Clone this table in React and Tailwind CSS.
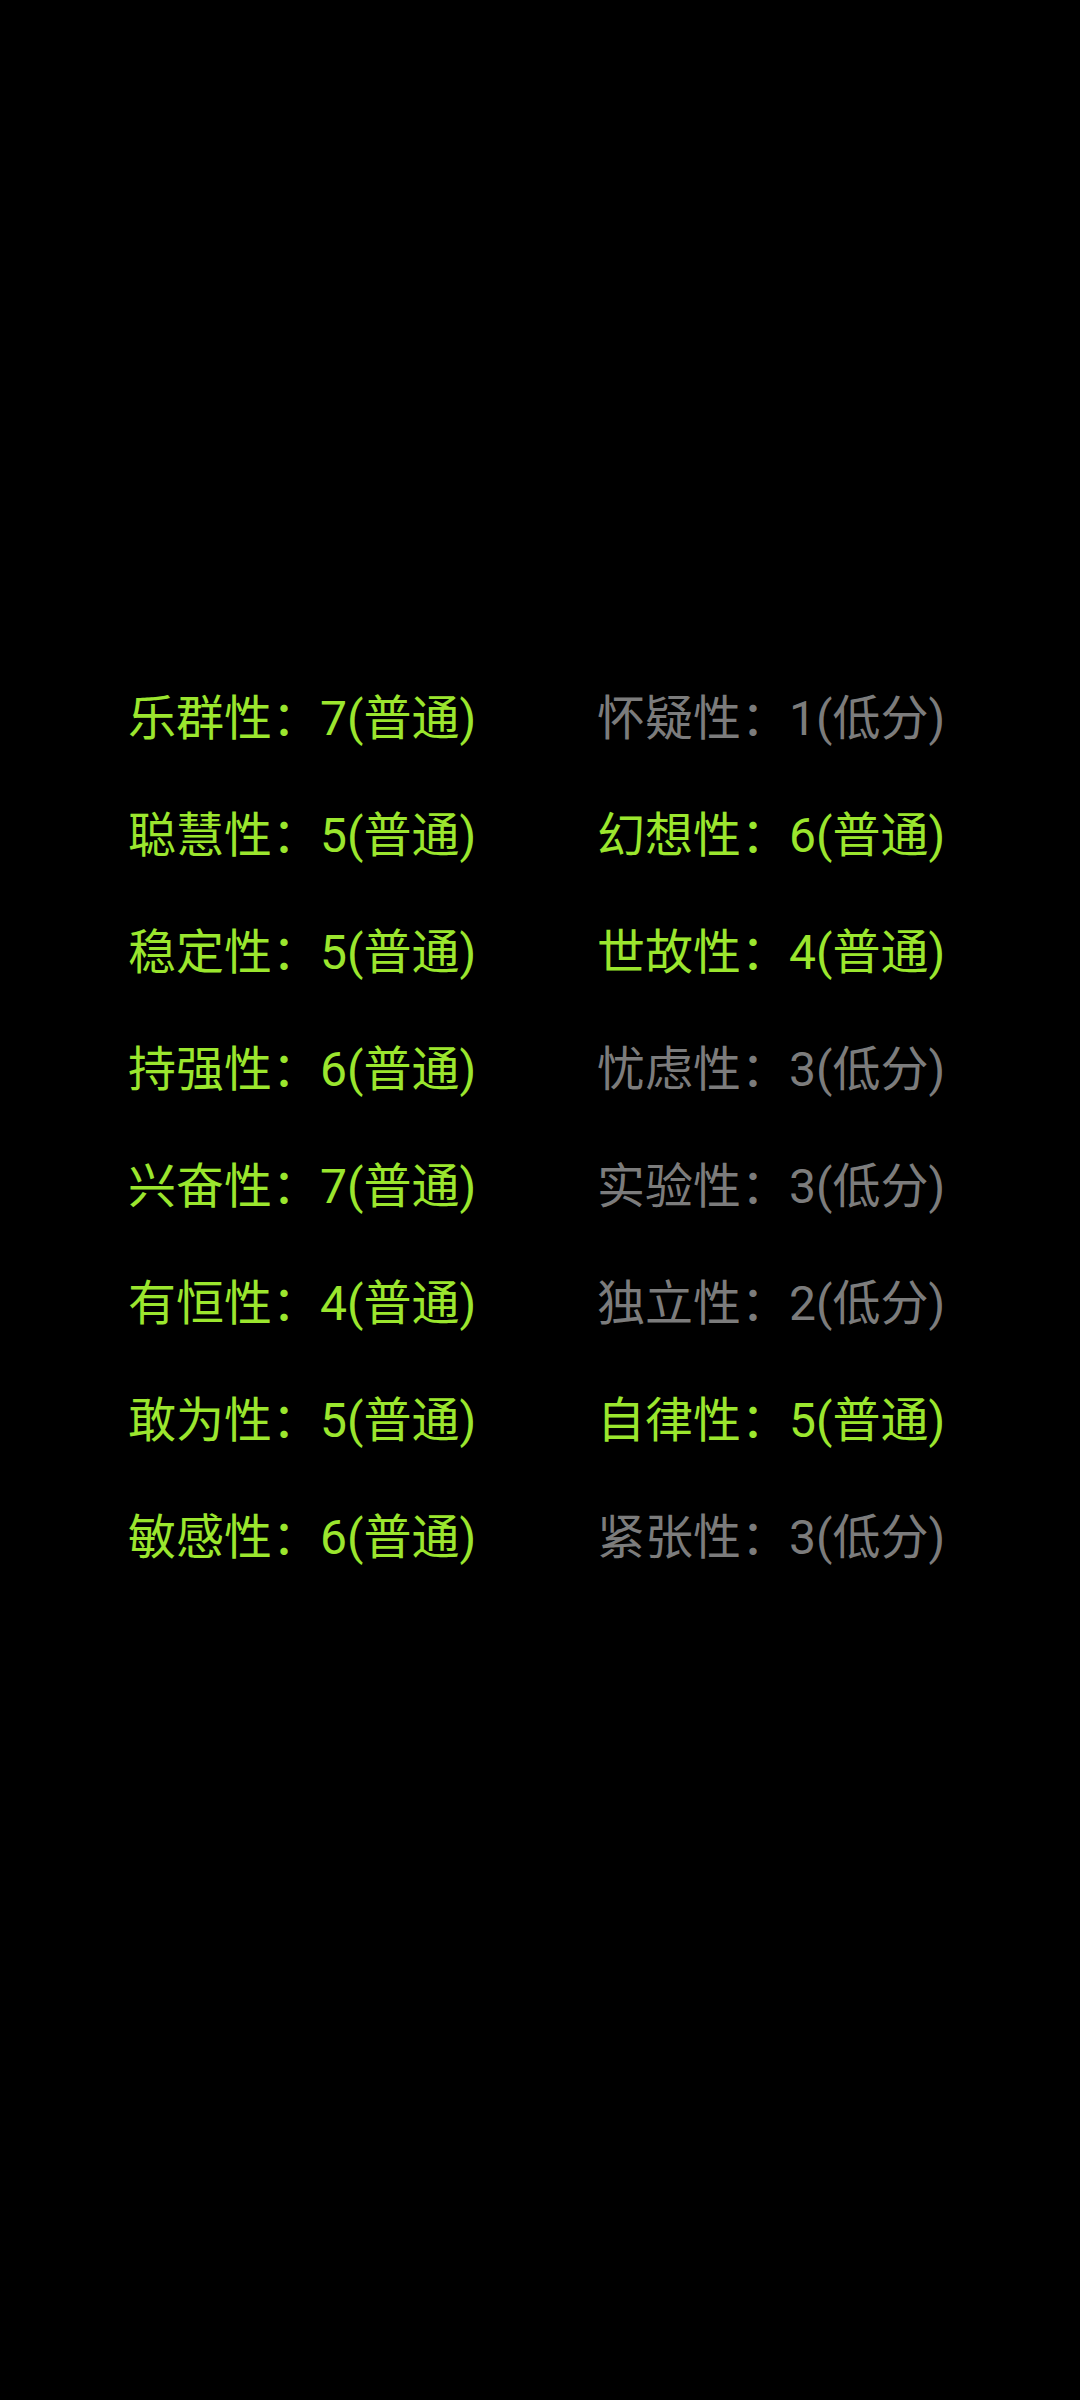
import React from "react";

const rows = [
  [["乐群性", 7, "普通"], ["怀疑性", 1, "低分"]],
  [["聪慧性", 5, "普通"], ["幻想性", 6, "普通"]],
  [["稳定性", 5, "普通"], ["世故性", 4, "普通"]],
  [["持强性", 6, "普通"], ["忧虑性", 3, "低分"]],
  [["兴奋性", 7, "普通"], ["实验性", 3, "低分"]],
  [["有恒性", 4, "普通"], ["独立性", 2, "低分"]],
  [["敢为性", 5, "普通"], ["自律性", 5, "普通"]],
  [["敏感性", 6, "普通"], ["紧张性", 3, "低分"]],
];

const Trait = ({ item }) => {
  const [name, score, level] = item;
  const low = level === "低分";
  return (
    <div
      className={`h-[117px] flex items-center text-[48px] leading-none whitespace-nowrap ${
        low ? "text-[#7c7c7c]" : "text-[#9be62e]"
      }`}
    >
      {name}：{score}({level})
    </div>
  );
};

export default function App() {
  return (
    <div
      className="w-[1080px] h-[2400px] bg-black pt-[660px] pl-[128px]"
      style={{ fontFamily: "Roboto, 'Noto Sans CJK SC', sans-serif" }}
    >
      <div className="grid grid-cols-[469px_1fr]">
        {rows.map((r, i) => (
          <React.Fragment key={i}>
            <Trait item={r[0]} />
            <Trait item={r[1]} />
          </React.Fragment>
        ))}
      </div>
    </div>
  );
}
